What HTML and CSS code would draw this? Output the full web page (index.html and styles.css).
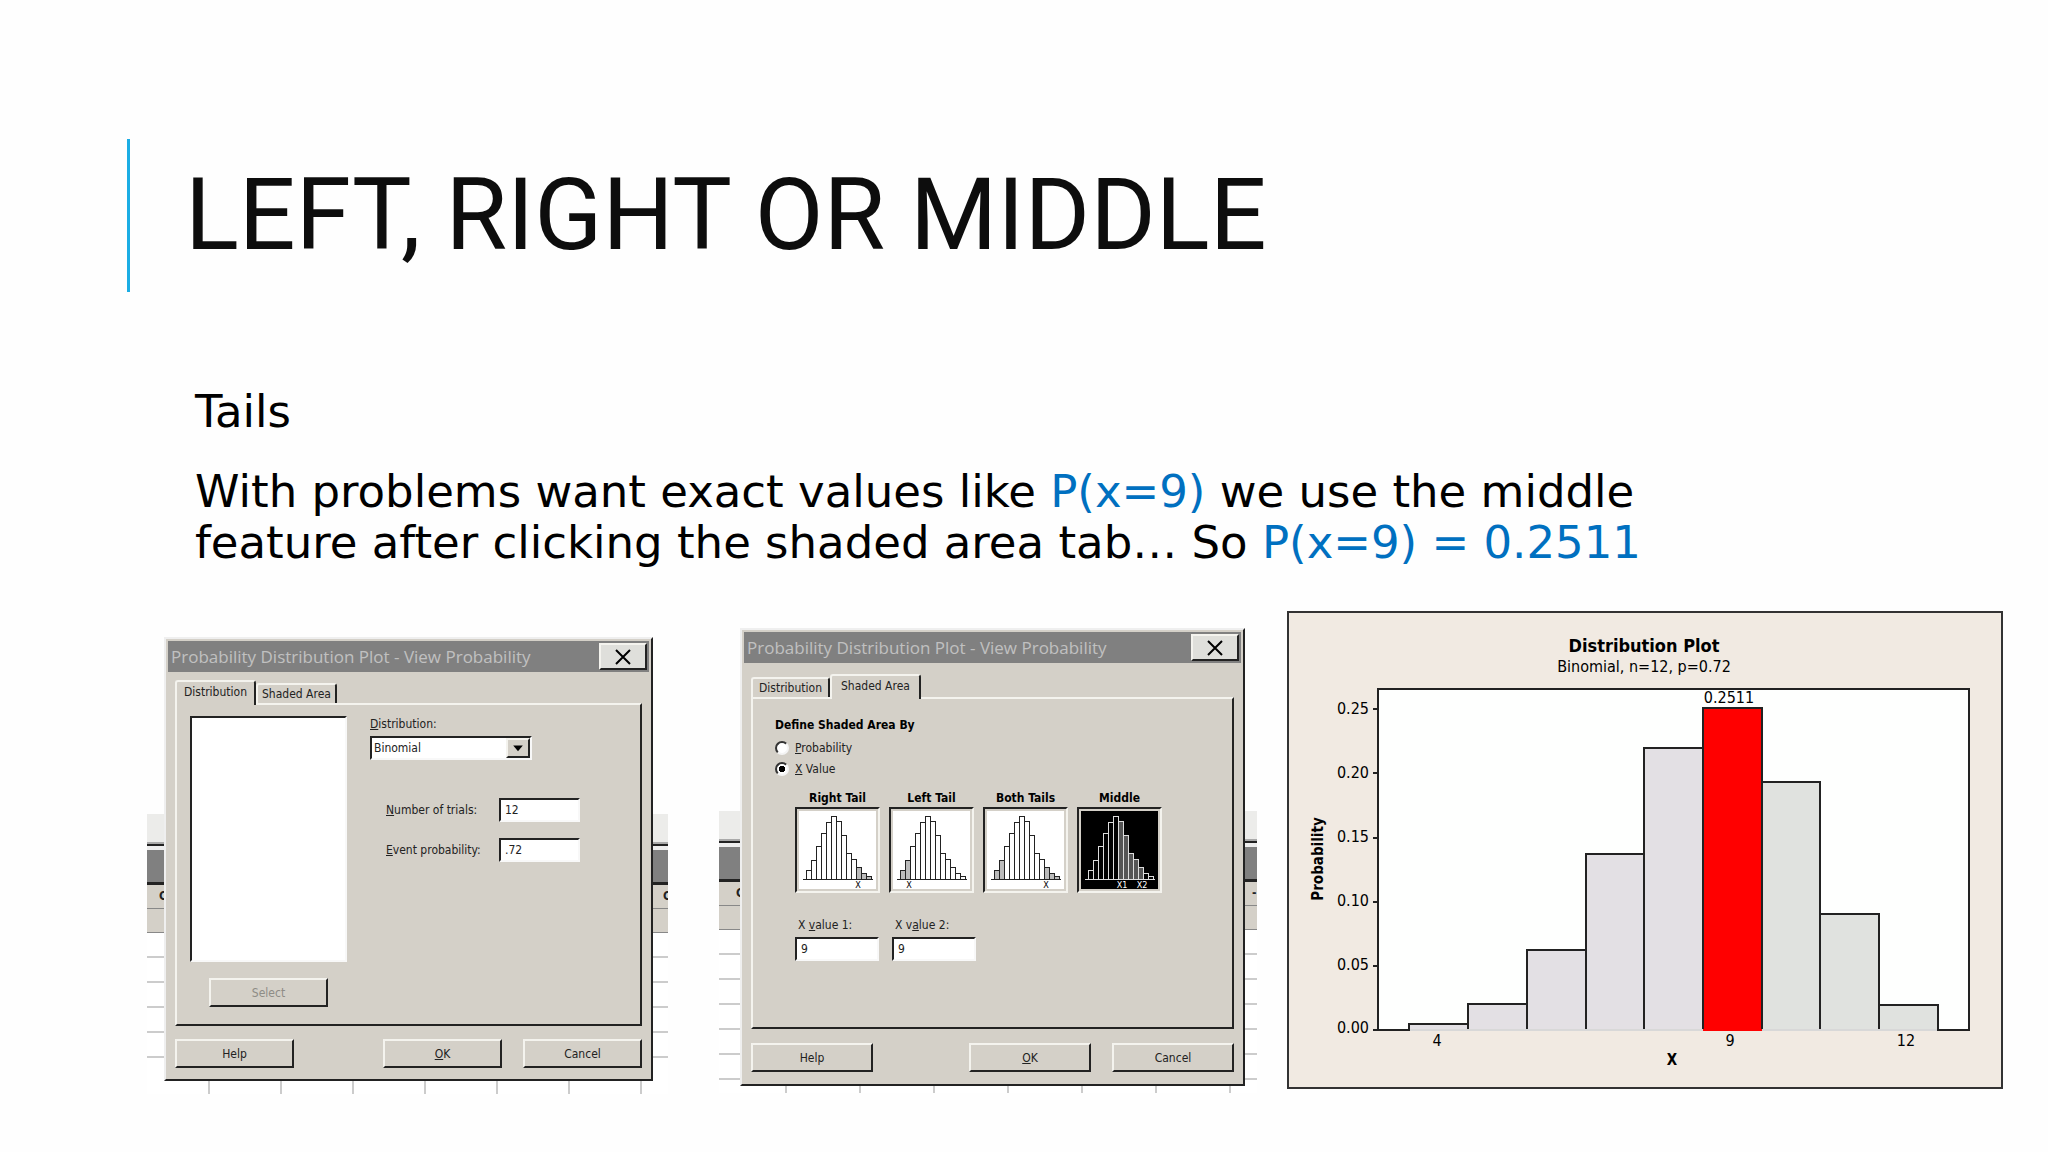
FILE: index.html
```
<!DOCTYPE html>
<html lang="en">
<head>
    <meta charset="UTF-8">
    <meta name="viewport" content="width=device-width, initial-scale=1.0">
    <title>Left, Right or Middle</title>
    <link rel="stylesheet" href="styles.css">
</head>
<body>
    <main class="slide">
        <header class="slide-title">
            <h1>LEFT, RIGHT OR MIDDLE</h1>
        </header>

        <div class="slide-text">
            <p>Tails</p>
            <p>With problems want exact values like <span class="math">P(x=9)</span> we use the middle<br>
            feature after clicking the shaded area tab… So <span class="math">P(x=9) = 0.2511</span></p>
        </div>

        <section class="figures">
            <!-- Distribution tab -->
            <div class="shot shot-distribution">
                <div class="sheet">
                    <div class="sheet-toolbar"></div>
                    <div class="sheet-caption"></div>
                    <div class="sheet-head"><b>C</b><b>C</b></div>
                    <div class="sheet-head"></div>
                    <div class="sheet-rows"></div>
                    <div class="sheet-columns"></div>
                </div>
                <div class="window">
                    <div class="titlebar">
                        <span>Probability Distribution Plot - View Probability</span>
                        <button class="close" aria-label="Close">
                            <svg viewBox="0 0 16 16"><path d="M1 1L15 15M15 1L1 15"/></svg>
                        </button>
                    </div>
                    <div class="tabs">
                        <button class="tab active">Distribution</button>
                        <button class="tab">Shaded Area</button>
                    </div>
                    <div class="panel panel-distribution">
                        <div class="picker">
                            <div class="listbox"></div>
                            <button class="btn" disabled>Select</button>
                        </div>
                        <div class="fields">
                            <label for="distribution"><u>D</u>istribution:</label>
                            <div class="combo">
                                <select id="distribution">
                                    <option>Binomial</option>
                                </select>
                                <svg viewBox="0 0 24 20"><path d="M6 7H18L12 14Z"/></svg>
                            </div>
                            <div class="params">
                                <label for="trials"><u>N</u>umber of trials:</label>
                                <input type="text" id="trials" value="12">
                                <label for="event"><u>E</u>vent probability:</label>
                                <input type="text" id="event" value=".72">
                            </div>
                        </div>
                    </div>
                    <div class="actions">
                        <button class="btn">Help</button>
                        <button class="btn ok"><u>O</u>K</button>
                        <button class="btn">Cancel</button>
                    </div>
                </div>
            </div>

            <!-- Shaded Area tab -->
            <div class="shot shot-shaded">
                <div class="sheet">
                    <div class="sheet-toolbar"></div>
                    <div class="sheet-caption"></div>
                    <div class="sheet-head"><b>C</b><b>-</b></div>
                    <div class="sheet-head"></div>
                    <div class="sheet-rows"></div>
                    <div class="sheet-columns"></div>
                </div>
                <div class="window">
                    <div class="titlebar">
                        <span>Probability Distribution Plot - View Probability</span>
                        <button class="close" aria-label="Close">
                            <svg viewBox="0 0 16 16"><path d="M1 1L15 15M15 1L1 15"/></svg>
                        </button>
                    </div>
                    <div class="tabs">
                        <button class="tab">Distribution</button>
                        <button class="tab active">Shaded Area</button>
                    </div>
                    <div class="panel panel-shaded">
                        <h2>Define Shaded Area By</h2>
                        <div class="option">
                            <input type="radio" name="shade" id="byProbability">
                            <label for="byProbability"><u>P</u>robability</label>
                        </div>
                        <div class="option">
                            <input type="radio" name="shade" id="byValue" checked>
                            <label for="byValue"><u>X</u> Value</label>
                        </div>
                        <div class="tails">
                            <div class="tail">
                                <h3>Right Tail</h3>
                                <button class="thumb" aria-label="Right Tail">
                                    <svg viewBox="0 0 77 78">
                                        <path class="shade" d="M57 68V56H62V62H67V65H72V68Z"/>
                                        <path class="bars" d="M4 68H74M7 68V59H12V68V49H17V68V35H22V68V22H27V68V11H32V68V5H37V68V10H42M42 68V10M42 24H47V68V42H52V68V48H57V68V56H62V68V62H67V68V65H72V68"/>
                                        <text x="59" y="77">X</text>
                                    </svg>
                                </button>
                            </div>
                            <div class="tail">
                                <h3>Left Tail</h3>
                                <button class="thumb" aria-label="Left Tail">
                                    <svg viewBox="0 0 77 78">
                                        <path class="shade" d="M7 68V59H12V49H17V68Z"/>
                                        <path class="bars" d="M4 68H74M7 68V59H12V68V49H17V68V35H22V68V22H27V68V11H32V68V5H37V68V10H42M42 68V10M42 24H47V68V42H52V68V48H57V68V56H62V68V62H67V68V65H72V68"/>
                                        <text x="16" y="77">X</text>
                                    </svg>
                                </button>
                            </div>
                            <div class="tail">
                                <h3>Both Tails</h3>
                                <button class="thumb" aria-label="Both Tails">
                                    <svg viewBox="0 0 77 78">
                                        <path class="shade" d="M7 68V59H12V49H17V68ZM57 68V56H62V62H67V65H72V68Z"/>
                                        <path class="bars" d="M4 68H74M7 68V59H12V68V49H17V68V35H22V68V22H27V68V11H32V68V5H37V68V10H42M42 68V10M42 24H47V68V42H52V68V48H57V68V56H62V68V62H67V68V65H72V68"/>
                                        <text x="59" y="77">X</text>
                                    </svg>
                                </button>
                            </div>
                            <div class="tail">
                                <h3>Middle</h3>
                                <button class="thumb selected" aria-label="Middle">
                                    <svg viewBox="0 0 77 78">
                                        <path class="shade" d="M37 68V10H42V24H47V42H52V48H57V56H62V68Z"/>
                                        <path class="bars" d="M4 68H74M7 68V59H12V68V49H17V68V35H22V68V22H27V68V11H32V68V5H37V68V10H42M42 68V10M42 24H47V68V42H52V68V48H57V68V56H62V68V62H67V68V65H72V68"/>
                                        <text x="41" y="77">X1</text>
                                        <text x="61" y="77">X2</text>
                                    </svg>
                                </button>
                            </div>
                        </div>
                        <div class="values">
                            <div>
                                <label for="x1">X <u>v</u>alue 1:</label>
                                <input type="text" id="x1" value="9">
                            </div>
                            <div>
                                <label for="x2">X v<u>a</u>lue 2:</label>
                                <input type="text" id="x2" value="9">
                            </div>
                        </div>
                    </div>
                    <div class="actions">
                        <button class="btn">Help</button>
                        <button class="btn ok"><u>O</u>K</button>
                        <button class="btn">Cancel</button>
                    </div>
                </div>
            </div>

            <!-- Distribution plot, n=12 p=0.72 -->
            <svg class="plot" viewBox="0 0 716 478">
                <rect class="plot-frame" x="1" y="1" width="714" height="476"/>
                <text class="plot-title" x="357" y="41">Distribution Plot</text>
                <text x="357" y="61">Binomial, n=12, p=0.72</text>
                <path class="plot-area" d="M91 419V78H682V419Z"/>
                <g class="plot-bars">
                    <path d="M122 419V413H181V419"/>
                    <path d="M181 419V393H240V419"/>
                    <path d="M240 419V339H299V419"/>
                    <path d="M299 419V243H357V419"/>
                    <path d="M357 419V137H416V419"/>
                    <path class="right" d="M475 419V171H533V419"/>
                    <path class="right" d="M533 419V303H592V419"/>
                    <path class="right" d="M592 419V394H651V419"/>
                    <path class="hit" d="M416 419V97H475V419"/>
                </g>
                <path class="plot-base" d="M123 419H650"/>
                <path class="plot-base hit" d="M416 419H475"/>
                <path class="plot-axis" d="M86 98H91M86 162H91M86 227H91M86 291H91M86 355H91M86 419H122M651 419H682"/>
                <text x="442" y="92">0.2511</text>
                <g class="plot-scale">
                    <text x="82" y="103">0.25</text>
                    <text x="82" y="167">0.20</text>
                    <text x="82" y="231">0.15</text>
                    <text x="82" y="295">0.10</text>
                    <text x="82" y="359">0.05</text>
                    <text x="82" y="422">0.00</text>
                </g>
                <text x="150" y="435">4</text>
                <text x="443" y="435">9</text>
                <text x="619" y="435">12</text>
                <text class="plot-label" x="385" y="454">X</text>
                <text class="plot-label" x="36" y="248" transform="rotate(-90 36 248)">Probability</text>
            </svg>
        </section>
    </main>
</body>
</html>
```
FILE: styles.css
```
body {
    margin: 0;
    background-color: #fefefe;
    color: #000;
}

.slide {
    padding: 139px 45px 56px 127px;
}

.slide-title {
    border-left: 3px solid #1cade4;
    padding: 15px 0 16px 55px;
}

h1 {
    margin: 0;
    font-family: Roboto, "Liberation Sans", sans-serif;
    font-size: 100px;
    line-height: 122px;
    font-weight: normal;
    color: #0d0d0d;
}

.slide-text {
    padding: 94px 0 0 68px;
    font-family: "DejaVu Sans", sans-serif;
    font-size: 45px;
    line-height: 51px;
}

.slide-text p {
    margin: 0 0 29px;
}

.slide-text p:last-child {
    margin-bottom: 43px;
}

.math {
    color: #0070c0;
}

.figures {
    display: grid;
    grid-template-columns: 572fr 568fr 716fr;
    align-items: start;
    padding-left: 20px;
    font-family: "DejaVu Sans Condensed", "DejaVu Sans", sans-serif;
    font-size: 12px;
    line-height: 16px;
    color: #222;
}

.shot {
    position: relative;
    margin-right: 51px;
}

.window {
    position: relative;
    background-color: #d4d0c8;
    border: 2px solid;
    border-color: #efefef #222 #222 #efefef;
    padding: 2px;
}

.titlebar {
    display: flex;
    align-items: center;
    justify-content: space-between;
    height: 31px;
    padding: 0 2px 0 3px;
    background-color: #808080;
    color: #c0c0c0;
    font-family: "Open Sans", sans-serif;
    font-size: 17px;
    white-space: nowrap;
}

button {
    font: inherit;
    color: inherit;
    background-color: #d4d0c8;
    border: 2px solid;
    border-color: #f4f3ee #222 #222 #f4f3ee;
    padding: 0;
}

.close {
    width: 48px;
    height: 27px;
    background-color: #dfdfdb;
}

.close svg {
    display: block;
    width: 16px;
    margin: auto;
    fill: none;
    stroke: #000;
    stroke-width: 2;
}

.tabs {
    display: flex;
    align-items: flex-end;
    padding: 8px 7px 0;
}

.tab {
    height: 20px;
    padding: 0 4px;
    border-bottom: 0;
    border-radius: 3px 3px 0 0;
    white-space: nowrap;
}

.tab.active {
    position: relative;
    height: 25px;
    margin-bottom: -2px;
    padding: 0 7px 4px;
}

.panel {
    margin: 0 7px;
    border: 2px solid;
    border-color: #f4f3ee #222 #222 #f4f3ee;
}

.actions {
    display: flex;
    padding: 13px 7px 9px;
}

.btn {
    width: 119px;
    height: 29px;
}

.btn:disabled {
    color: #8e8c86;
}

.btn.ok {
    margin: 0 21px 0 auto;
}

input[type="text"], select {
    box-sizing: border-box;
    height: 24px;
    margin: 0;
    padding: 0 4px;
    font: inherit;
    color: inherit;
    background-color: #fff;
    border: 2px solid;
    border-color: #222 #f8f8f8 #f8f8f8 #222;
    border-radius: 0;
}

/* Distribution tab */
.shot-distribution {
    margin-top: 26px;
    padding: 0 15px 13px 17px;
}

.panel-distribution {
    display: flex;
    gap: 23px;
    padding: 11px 0 17px 13px;
}

.picker {
    width: 157px;
    text-align: center;
}

.listbox {
    height: 242px;
    margin-bottom: 16px;
    background-color: #fff;
    border: 2px solid;
    border-color: #222 #f8f8f8 #f8f8f8 #222;
}

.fields > label {
    display: block;
    margin-bottom: 4px;
}

.combo {
    position: relative;
    width: 162px;
}

.combo select {
    appearance: none;
    width: 100%;
    padding: 0 2px;
}

/* drop-down arrow laid over the select */
.combo svg {
    position: absolute;
    box-sizing: border-box;
    top: 2px;
    right: 2px;
    width: 24px;
    height: 20px;
    border: 2px solid;
    border-color: #f4f3ee #222 #222 #f4f3ee;
    background-color: #d4d0c8;
    pointer-events: none;
}

.params {
    display: grid;
    grid-template-columns: 113px 81px;
    row-gap: 16px;
    align-items: center;
    padding: 38px 0 0 16px;
    white-space: nowrap;
}

/* Shaded Area tab */
.shot-shaded {
    margin-top: 17px;
    margin-right: 30px;
    padding: 0 12px 7px 21px;
}

.shot-shaded .tabs {
    padding-top: 11px;
}

.shot-shaded .tab {
    padding-right: 6px;
    padding-left: 6px;
}

.shot-shaded .tab.active {
    padding-right: 9px;
    padding-left: 9px;
}

.shot-shaded .btn {
    width: 122px;
}

.shot-shaded .actions {
    padding: 14px 7px 10px;
}

.panel-shaded {
    padding: 17px 0 66px 22px;
}

h2, h3 {
    margin: 0;
    font-size: 12px;
    line-height: 18px;
    color: #000;
}

h2 {
    margin-bottom: 3px;
}

.option {
    display: flex;
    align-items: center;
    gap: 6px;
    height: 21px;
}

input[type="radio"] {
    appearance: none;
    box-sizing: border-box;
    width: 14px;
    height: 14px;
    margin: 0;
    border: 2px solid;
    border-color: #333 #f4f4f4 #f4f4f4 #333;
    border-radius: 50%;
    background-color: #fff;
}

input[type="radio"]:checked {
    background-image: radial-gradient(#000 3px, #fff 3px);
}

.tails {
    display: flex;
    gap: 9px;
    padding: 10px 0 0 20px;
    text-align: center;
}

.tail {
    width: 85px;
    white-space: nowrap;
}

.thumb {
    display: block;
    width: 85px;
    height: 86px;
    padding: 2px;
    border-color: #222 #f4f3ee #f4f3ee #222;
}

.thumb svg {
    display: block;
    background-color: #fff;
    font-size: 9px;
    text-anchor: middle;
    shape-rendering: crispEdges;
}

.bars {
    fill: none;
    stroke: #222;
}

.shade {
    fill: #bbb;
}

.thumb.selected svg {
    background-color: #000;
    fill: #fff;
}

.selected .bars {
    stroke: #ddd;
}

.selected .shade {
    fill: #555;
}

.values {
    display: flex;
    gap: 13px;
    padding: 24px 0 0 20px;
}

.values label {
    display: block;
    margin: 0 0 4px 3px;
}

.values input {
    width: 84px;
}

/* Worksheet behind the windows */
.sheet {
    position: absolute;
    inset: 177px 0 0;
    display: flex;
    flex-direction: column;
}

.sheet-toolbar {
    height: 28px;
    background-color: #ececea;
    border-bottom: 2px solid #aaa;
}

.sheet-caption {
    height: 36px;
    border-top: 2px solid #222;
    border-bottom: 3px solid #222;
    background-color: #808080;
    box-shadow: inset 0 4px #eee;
}

.sheet-head {
    display: flex;
    justify-content: space-between;
    height: 23px;
    border-bottom: 1px solid #888;
    background-color: #d4d0c8;
    line-height: 22px;
}

.sheet-head b {
    width: 5px;
    overflow: hidden;
}

.sheet-head b:first-child {
    margin-left: 12px;
}

.shot-shaded .sheet-head b:first-child {
    margin-left: 17px;
}

.sheet-rows {
    flex: 1;
    background-image: repeating-linear-gradient(#fff 0 23px, #ccc 23px 25px);
}

.sheet-columns {
    height: 13px;
    background-image: repeating-linear-gradient(90deg, #fff 0 61px, #ccc 61px 63px, #fff 63px 72px);
}

.shot-shaded .sheet {
    inset: 183px 0 0;
}

.shot-shaded .sheet-columns {
    height: 7px;
    background-image: repeating-linear-gradient(90deg, #fff 0 66px, #ccc 66px 68px, #fff 68px 74px);
}

/* Plot */
.plot {
    display: block;
    width: 100%;
    font-size: 16px;
    text-anchor: middle;
    fill: #000;
}

.plot-frame {
    fill: #f1eae2;
    stroke: #333;
    stroke-width: 2;
}

.plot-area {
    fill: #fefffe;
    stroke: #222;
    stroke-width: 2;
}

.plot-title {
    font-size: 18px;
    font-weight: bold;
}

.plot-label {
    font-size: 15px;
    font-weight: bold;
}

.plot-scale {
    text-anchor: end;
}

.plot-bars {
    fill: #e3e0e4;
    stroke: #222;
    stroke-width: 2;
}

.plot-bars .right {
    fill: #e0e2df;
}

.plot-bars .hit {
    fill: #f00;
}

.plot-base {
    stroke: #d8d8d8;
    stroke-width: 2;
}

.plot-base.hit {
    stroke: #f00;
}

.plot-axis {
    fill: none;
    stroke: #222;
    stroke-width: 2;
}
```
